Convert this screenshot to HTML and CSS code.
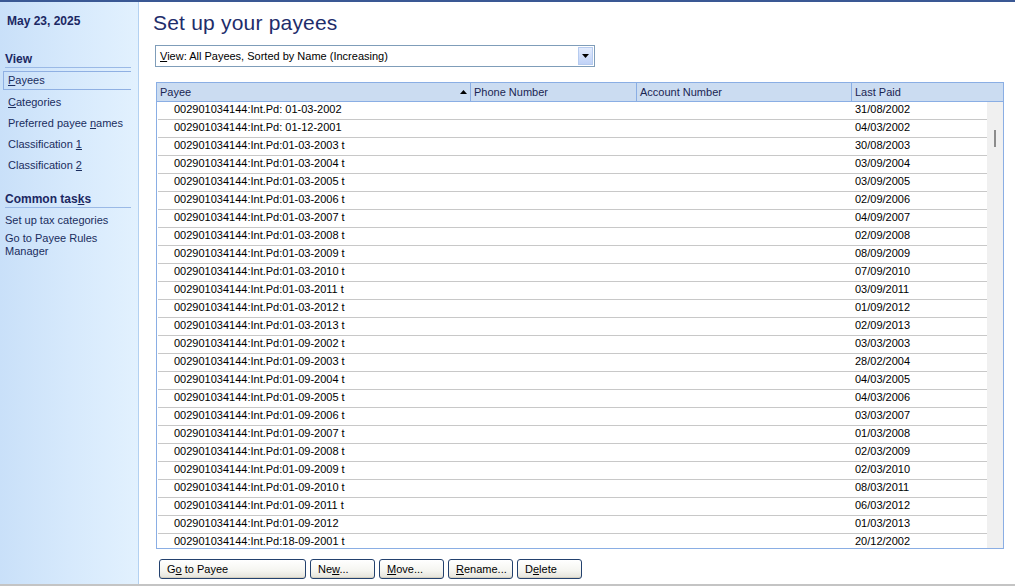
FILE: index.html
```html
<!DOCTYPE html>
<html>
<head>
<meta charset="utf-8">
<link rel="stylesheet" href="styles.css">
</head>
<body>
<div class="app">
  <aside class="sidebar">
    <div class="date">May 23, 2025</div>
    <div class="sec-title">View</div>
    <ul class="nav">
      <li class="sel"><u>P</u>ayees</li>
      <li><u>C</u>ategories</li>
      <li>Preferred payee <u>n</u>ames</li>
      <li>Classification <u>1</u></li>
      <li>Classification <u>2</u></li>
    </ul>
    <div class="sec-title tasks">Common tas<u>k</u>s</div>
    <ul class="tasklist">
      <li>Set up tax categories</li>
      <li>Go to Payee Rules Manager</li>
    </ul>
  </aside>
  <main class="main">
    <h1 class="title">Set up your payees</h1>
    <div class="select">
      <span class="select-text"><u>V</u>iew: All Payees, Sorted by Name (Increasing)</span>
      <span class="select-btn"><svg width="7" height="4" viewBox="0 0 7 4"><path d="M0 0H7L3.5 4Z" fill="#000"/></svg></span>
    </div>
    <div class="table">
      <div class="thead">
        <div class="th c1">Payee<svg class="sort" width="7" height="4" viewBox="0 0 7 4"><path d="M0 4H7L3.5 0Z" fill="#000"/></svg></div>
        <div class="th c2">Phone Number</div>
        <div class="th c3">Account Number</div>
        <div class="th c4">Last Paid</div>
      </div>
      <div class="tbody">
        <div class="rows">
          <div class="row"><span class="c1">002901034144:Int.Pd: 01-03-2002</span><span class="c2"></span><span class="c3"></span><span class="c4">31/08/2002</span></div>
          <div class="row"><span class="c1">002901034144:Int.Pd: 01-12-2001</span><span class="c2"></span><span class="c3"></span><span class="c4">04/03/2002</span></div>
          <div class="row"><span class="c1">002901034144:Int.Pd:01-03-2003 t</span><span class="c2"></span><span class="c3"></span><span class="c4">30/08/2003</span></div>
          <div class="row"><span class="c1">002901034144:Int.Pd:01-03-2004 t</span><span class="c2"></span><span class="c3"></span><span class="c4">03/09/2004</span></div>
          <div class="row"><span class="c1">002901034144:Int.Pd:01-03-2005 t</span><span class="c2"></span><span class="c3"></span><span class="c4">03/09/2005</span></div>
          <div class="row"><span class="c1">002901034144:Int.Pd:01-03-2006 t</span><span class="c2"></span><span class="c3"></span><span class="c4">02/09/2006</span></div>
          <div class="row"><span class="c1">002901034144:Int.Pd:01-03-2007 t</span><span class="c2"></span><span class="c3"></span><span class="c4">04/09/2007</span></div>
          <div class="row"><span class="c1">002901034144:Int.Pd:01-03-2008 t</span><span class="c2"></span><span class="c3"></span><span class="c4">02/09/2008</span></div>
          <div class="row"><span class="c1">002901034144:Int.Pd:01-03-2009 t</span><span class="c2"></span><span class="c3"></span><span class="c4">08/09/2009</span></div>
          <div class="row"><span class="c1">002901034144:Int.Pd:01-03-2010 t</span><span class="c2"></span><span class="c3"></span><span class="c4">07/09/2010</span></div>
          <div class="row"><span class="c1">002901034144:Int.Pd:01-03-2011 t</span><span class="c2"></span><span class="c3"></span><span class="c4">03/09/2011</span></div>
          <div class="row"><span class="c1">002901034144:Int.Pd:01-03-2012 t</span><span class="c2"></span><span class="c3"></span><span class="c4">01/09/2012</span></div>
          <div class="row"><span class="c1">002901034144:Int.Pd:01-03-2013 t</span><span class="c2"></span><span class="c3"></span><span class="c4">02/09/2013</span></div>
          <div class="row"><span class="c1">002901034144:Int.Pd:01-09-2002 t</span><span class="c2"></span><span class="c3"></span><span class="c4">03/03/2003</span></div>
          <div class="row"><span class="c1">002901034144:Int.Pd:01-09-2003 t</span><span class="c2"></span><span class="c3"></span><span class="c4">28/02/2004</span></div>
          <div class="row"><span class="c1">002901034144:Int.Pd:01-09-2004 t</span><span class="c2"></span><span class="c3"></span><span class="c4">04/03/2005</span></div>
          <div class="row"><span class="c1">002901034144:Int.Pd:01-09-2005 t</span><span class="c2"></span><span class="c3"></span><span class="c4">04/03/2006</span></div>
          <div class="row"><span class="c1">002901034144:Int.Pd:01-09-2006 t</span><span class="c2"></span><span class="c3"></span><span class="c4">03/03/2007</span></div>
          <div class="row"><span class="c1">002901034144:Int.Pd:01-09-2007 t</span><span class="c2"></span><span class="c3"></span><span class="c4">01/03/2008</span></div>
          <div class="row"><span class="c1">002901034144:Int.Pd:01-09-2008 t</span><span class="c2"></span><span class="c3"></span><span class="c4">02/03/2009</span></div>
          <div class="row"><span class="c1">002901034144:Int.Pd:01-09-2009 t</span><span class="c2"></span><span class="c3"></span><span class="c4">02/03/2010</span></div>
          <div class="row"><span class="c1">002901034144:Int.Pd:01-09-2010 t</span><span class="c2"></span><span class="c3"></span><span class="c4">08/03/2011</span></div>
          <div class="row"><span class="c1">002901034144:Int.Pd:01-09-2011 t</span><span class="c2"></span><span class="c3"></span><span class="c4">06/03/2012</span></div>
          <div class="row"><span class="c1">002901034144:Int.Pd:01-09-2012</span><span class="c2"></span><span class="c3"></span><span class="c4">01/03/2013</span></div>
          <div class="row"><span class="c1">002901034144:Int.Pd:18-09-2001 t</span><span class="c2"></span><span class="c3"></span><span class="c4">20/12/2002</span></div>
        </div>
        <div class="scrollbar"><div class="thumb"></div></div>
      </div>
    </div>
    <div class="buttons">
      <button class="btn b-go">G<u>o</u> to Payee</button>
      <button class="btn b-sm">Ne<u>w</u>...</button>
      <button class="btn b-sm"><u>M</u>ove...</button>
      <button class="btn b-sm"><u>R</u>ename...</button>
      <button class="btn b-sm">D<u>e</u>lete</button>
    </div>
  </main>
</div>
</body>
</html>
```

FILE: styles.css
```css
* { box-sizing: border-box; }
html, body { margin: 0; padding: 0; }
body {
  width: 1015px;
  height: 586px;
  overflow: hidden;
  font-family: "Liberation Sans", Arial, sans-serif;
  font-size: 11px;
  color: #000;
  background: #fff;
}
u { text-decoration: underline; text-underline-offset: 1px; }
.app {
  display: flex;
  height: 586px;
  border-top: 2px solid #3a5894;
  border-bottom: 2px solid #c4c4c4;
}
.sidebar {
  width: 139px;
  flex: none;
  background: linear-gradient(to right, #c9e0f9 0%, #d6e9fc 50%, #e2f1fe 100%);
  border-right: 1px solid #b3d1f1;
  padding: 12px 0 0 0;
  color: #1b2b66;
}
.date {
  font-weight: bold;
  font-size: 12px;
  color: #1b2863;
  padding-left: 7px;
  height: 15px;
  line-height: 15px;
}
.sec-title {
  margin: 23px 7px 0 5px;
  font-weight: bold;
  font-size: 12px;
  color: #1b2863;
  line-height: 14px;
  padding-bottom: 1px;
  border-bottom: 1px solid #9ab9e6;
}
.sec-title.tasks { margin-top: 15px; }
.nav, .tasklist { list-style: none; margin: 0; padding: 0; }
.nav { margin-top: 3px; }
.nav li {
  height: 21px;
  line-height: 19px;
  padding-left: 8px;
  color: #1a2d5e;
}
.nav li.sel {
  height: 19px;
  line-height: 17px;
  margin: 0 7px 2px 3px;
  padding-left: 4px;
  border: 1px solid #8fb0e3;
  border-right: none;
  margin-bottom: 3px;
}
.tasklist { margin-top: 6px; }
.tasklist li {
  padding-left: 5px;
  line-height: 13px;
  margin-bottom: 5px;
  width: 120px;
  color: #1a2d5e;
}
.main {
  flex: 1;
  padding: 0 0 0 14px;
  display: flex;
  flex-direction: column;
}
.title {
  margin: 8px 0 0 0;
  font-size: 21px;
  font-weight: normal;
  color: #1e2d6b;
  line-height: 26px;
  height: 26px;
  letter-spacing: 0.2px;
}
.select {
  margin: 9px 0 0 2px;
  width: 440px;
  height: 22px;
  border: 1px solid #7f9db9;
  display: flex;
  align-items: center;
  background: #fff;
}
.select-text { flex: 1; padding-left: 4px; line-height: 18px; }
.select-btn {
  width: 15px;
  height: 18px;
  margin-right: 1px;
  border: 1px solid #b6cbef;
  background: linear-gradient(to bottom, #e2ebfd, #c0d2f7);
  display: flex;
  align-items: center;
  justify-content: center;
}
.table {
  margin: 15px 0 0 3px;
  width: 848px;
  height: 467px;
  border: 1px solid #8aaee4;
  display: flex;
  flex-direction: column;
}
.thead {
  display: flex;
  height: 19px;
  flex: none;
  background: #cbdcf1;
  border-bottom: 1px solid #8aaee4;
}
.th {
  line-height: 18px;
  padding-left: 3px;
  border-right: 1px solid #8aaee4;
  color: #1a2552;
  position: relative;
}
.th.c4 { border-right: none; }
.sort { position: absolute; right: 3px; top: 7px; }
.c1 { width: 314px; flex: none; }
.c2 { width: 166px; flex: none; }
.c3 { width: 215px; flex: none; }
.c4 { flex: 1; }
.tbody {
  flex: 1;
  display: flex;
  overflow: hidden;
}
.rows { flex: 1; overflow: hidden; }
.row {
  display: flex;
  height: 18px;
  line-height: 15px;
  border-bottom: 1px solid #c8c8c8;
  margin-left: 1px;
}
.row .c1 { padding-left: 16px; width: 313px; white-space: nowrap; }
.row .c4 { padding-left: 3px; }
.scrollbar {
  width: 16px;
  flex: none;
  background: #f0f0f0;
  position: relative;
}
.thumb {
  position: absolute;
  left: 7px;
  top: 28px;
  width: 2px;
  height: 17px;
  background: #8c8c8c;
}
.buttons {
  display: flex;
  margin: 10px 0 0 6px;
  gap: 4px;
}
.btn {
  height: 20px;
  font-family: "Liberation Sans", Arial, sans-serif;
  font-size: 11px;
  color: #000;
  text-align: left;
  padding: 0 0 1px 7px;
  border: 1px solid #23416e;
  border-radius: 3px;
  background: linear-gradient(to bottom, #ffffff 0%, #f5f5f0 60%, #e4e3da 100%);
  box-shadow: inset 0 -1px 0 #d6d0c0;
}
.b-go { width: 147px; }
.b-sm { width: 65px; }
```
